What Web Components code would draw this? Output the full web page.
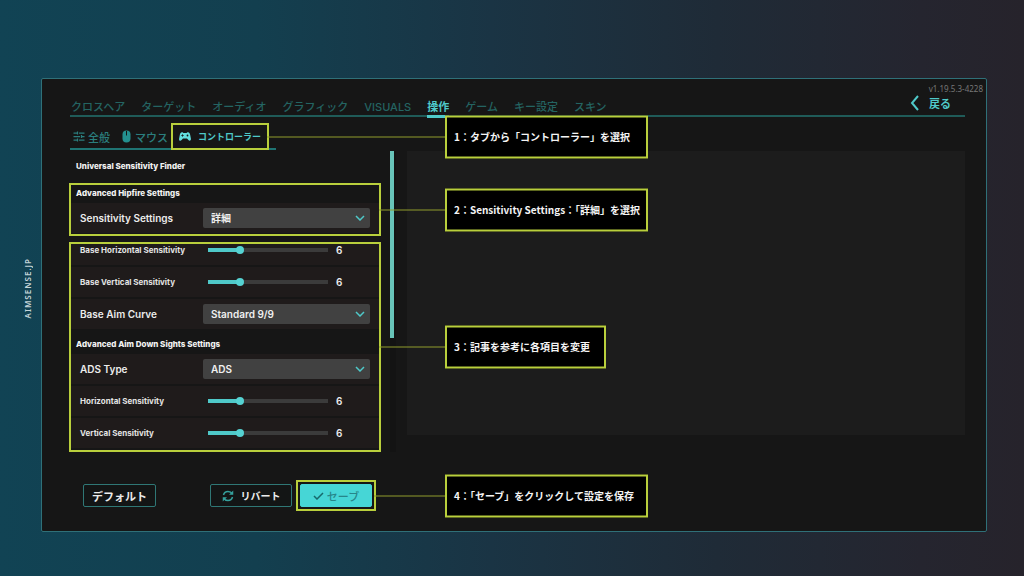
<!DOCTYPE html>
<html lang="ja">
<head>
<meta charset="utf-8">
<meta name="viewport" content="width=device-width, initial-scale=1">
<title>コントローラー設定</title>
<style>
  body {
    margin: 0;
    --teal: #4fc9c9;
    --teal-dim: #246462;
    --mark: #b9cf3c;
    --jp: "Noto Sans CJK JP", sans-serif;
    --ui: Inter, "Noto Sans CJK JP", sans-serif;
    font-family: var(--jp);
    color: #e8e8e8;
    background: linear-gradient(90deg, #114354 0%, #133f4f 25%, #1a3444 48%, #1f2b37 70%, #25252f 90%, #26232b 100%);
    min-height: 100vh;
  }
</style>
</head>
<body>
<guide-page>
  <span slot="brand">AIMSENSE.JP</span>
  <settings-panel></settings-panel>
</guide-page>

<script>
const define = (name, markup, setup) => {
  const template = document.createElement('template');
  template.innerHTML = markup;
  customElements.define(name, class extends HTMLElement {
    constructor() {
      super();
      this.attachShadow({ mode: 'open' }).append(template.content.cloneNode(true));
    }
    connectedCallback() {
      if (setup) setup(this, this.shadowRoot);
    }
  });
};

define('guide-page', `
  <style>
    :host { display: grid; grid-template-columns: 41px minmax(0, 1fr) 37px; min-height: 100vh; }
    aside { display: flex; align-items: center; justify-content: flex-end; padding-right: 8px; }
    .brand { writing-mode: vertical-rl; transform: rotate(180deg); font: 600 8px/10px "Noto Sans", sans-serif; letter-spacing: 1px; color: #c3d3d8; }
    main { padding: 78px 0 44px; }
  </style>
  <aside><div class="brand"><slot name="brand"></slot></div></aside>
  <main><slot></slot></main>
`);

define('ui-icon', `
  <style>
    :host { display: inline-flex; flex: none; }
    svg { display: block; fill: none; stroke: currentColor; stroke-width: 2; }
  </style>
`, (host, root) => {
  const icons = {
    sliders: [12, 11, '0 0 24 22', '<path d="M1 4h7M12 4h11M1 11h13M18 11h5M1 18h7M12 18h11M9 1v6M17 8v6M9 15v6" stroke-width="2.5"/>'],
    mouse: [9, 13, '0 0 18 26', '<rect x="1" y="1" width="16" height="24" rx="8" fill="currentColor" stroke="none"/><path d="M9 2v9" stroke="#161616"/>'],
    pad: [12, 9, '0 0 24 18', '<path d="M6 0.500c2 0 2.500 1.500 4 1.500h4c1.500 0 2-1.500 4-1.500 2.500 0 3.500 2 4.300 5l1.500 8c0.500 4-3 5-5 2.500L16 13H8l-2.800 3C3 18.500-0.300 17.500 0.200 13.500l1.500-8c0.800-3 1.800-5 4.300-5z" fill="currentColor" stroke="none"/><path d="M7 4.500v5M4.500 7h5" stroke="#161616" stroke-width="1.500"/><circle cx="17" cy="7" r="1.800" fill="#161616" stroke="none"/>'],
    back: [10, 16, '0 0 10 16', '<path d="M8 1L2 8l6 7"/>'],
    down: [10, 6, '0 0 10 6', '<path d="M1 1l4 4 4-4" stroke-width="1.500"/>'],
    check: [11, 8, '0 0 11 8', '<path d="M1 4l3 3 6-6" stroke-width="1.500"/>'],
    refresh: [12, 12, '0 0 24 24', '<path d="M3 10C4 6 7 3 12 3c4 0 7 2 9 5M21 14c-1 4-4 7-9 7-4 0-7-2-9-5" stroke-width="3"/><path d="M22.500 1v8.500H14zM1.500 23v-8.500H10z" fill="currentColor" stroke="none"/>']
  };
  const [w, h, box, shape] = icons[host.getAttribute('name')];
  root.querySelector('svg')?.remove();
  root.innerHTML += `<svg width="${w}" height="${h}" viewBox="${box}" aria-hidden="true">${shape}</svg>`;
});

define('guide-mark', `
  <style>
    :host { display: block; position: relative; box-sizing: border-box; border: 2px solid var(--mark); z-index: 2; }
    .note { position: absolute; left: 100%; top: 50%; transform: translateY(-50%); display: flex; align-items: center; pointer-events: none; }
    .line { width: var(--reach, 66px); height: 1px; background: #8f9c2c; }
    p { box-sizing: border-box; width: var(--note-width, 203px); margin: 0; padding: 12px 7px 13px; border: 2px solid var(--mark); background: #000; color: #f4f4f4; font: 700 10px/14px var(--jp); white-space: nowrap; }
  </style>
  <slot></slot>
  <div class="note" role="note"><span class="line"></span><p><slot name="note"></slot></p></div>
`);

define('main-tabs', `
  <style>
    :host { display: flex; align-items: flex-end; justify-content: space-between; height: 21px; border-bottom: 2px solid #1f5b58; margin-left: 1px; }
    nav { display: flex; gap: 16px; padding-left: 1px; }
    a { display: block; height: 17px; font: 500 11px/18px var(--ui); color: var(--teal-dim); text-decoration: none; white-space: nowrap; }
    a[aria-current] { color: var(--teal); font-weight: 700; border-bottom: 3px solid var(--teal); margin-bottom: -3px; }
    button { align-self: flex-start; display: flex; align-items: center; gap: 9px; padding: 0; margin-right: 14px; border: 0; background: none; color: var(--teal); font: 700 11px/18px var(--jp); }
  </style>
  <nav>
    <a href="#crosshair">クロスヘア</a><a href="#target">ターゲット</a><a href="#audio">オーディオ</a><a href="#graphic">グラフィック</a><a href="#visuals">VISUALS</a><a href="#control" aria-current="page">操作</a><a href="#game">ゲーム</a><a href="#keys">キー設定</a><a href="#skin">スキン</a>
  </nav>
  <button type="button"><ui-icon name="back"></ui-icon>戻る</button>
`);

define('sub-tabs', `
  <style>
    :host { display: flex; margin: 6px 0 0 1px; }
    nav { display: flex; align-items: stretch; box-sizing: border-box; height: 27px; padding: 0 7px 0 3px; background: linear-gradient(#1f7473, #1f7473) bottom / 100% 2px no-repeat; }
    a { display: flex; align-items: center; gap: 3px; color: #2b7e7e; font: 500 11px/16px var(--jp); text-decoration: none; white-space: nowrap; }
    .mouse { margin: 0 3px 0 12px; gap: 4px; }
    .mouse ui-icon { color: #23908f; }
    guide-mark { --reach: 178px; }
    .pad { height: 23px; padding: 0 6px; gap: 7px; color: var(--teal); font-size: 9px; font-weight: 700; }
    .pad ui-icon { color: #62dede; }
  </style>
  <nav>
    <a href="#general"><ui-icon name="sliders"></ui-icon>全般</a>
    <a class="mouse" href="#mouse"><ui-icon name="mouse"></ui-icon>マウス</a>
    <guide-mark>
      <a class="pad" href="#controller" aria-current="page"><ui-icon name="pad"></ui-icon>コントローラー</a>
      <span slot="note">1：タブから「コントローラー」を選択</span>
    </guide-mark>
  </nav>
`);

define('setting-heading', `
  <style>
    :host { display: block; }
    h2 { margin: 0; padding: var(--lead, 0) 0 0 5px; font: 800 8px/var(--line, 16px) var(--ui); color: #f2f2f2; }
  </style>
  <h2><slot></slot></h2>
`);

define('setting-select', `
  <style>
    :host { display: grid; grid-template-columns: 123px minmax(0, 1fr); align-items: center; height: 30px; padding: 0 9px; background: #1f1b1b; }
    label { font: 600 10px/16px var(--ui); color: #ececec; }
    .box { position: relative; }
    select { display: block; appearance: none; width: 100%; height: 20px; padding: 0 8px; border: 0; border-radius: 2px; background: #414141; color: #f0f0f0; font: 600 10px/20px var(--ui); }
    ui-icon { position: absolute; right: 5px; top: 7px; color: var(--teal); pointer-events: none; }
  </style>
  <label for="field"></label>
  <div class="box"><select id="field"><option></option></select><ui-icon name="down"></ui-icon></div>
`, (host, root) => {
  root.querySelector('label').textContent = host.getAttribute('label');
  root.querySelector('option').textContent = host.getAttribute('value');
});

define('setting-slider', `
  <style>
    :host { display: grid; grid-template-columns: 128px minmax(0, 1fr) 34px; align-items: center; height: 30px; padding: 0 9px; background: #1f1b1b; }
    label { font: 700 8px/12px var(--ui); color: #e4e4e4; white-space: nowrap; }
    input { appearance: none; width: 100%; height: 8px; margin: 0; background: linear-gradient(90deg, var(--teal) 26%, #3b3b3b 26%) center / 100% 4px no-repeat; }
    input::-webkit-slider-thumb { appearance: none; width: 8px; height: 8px; border-radius: 50%; background: #55d2d2; }
    .track { padding-right: 8px; display: flex; }
    output { font: 600 10px/14px var(--ui); color: #ececec; }
  </style>
  <label for="field"></label>
  <div class="track"><input id="field" type="range" min="0" max="24" value="6"></div>
  <output for="field">6</output>
`, (host, root) => {
  root.querySelector('label').textContent = host.getAttribute('label');
  const input = root.querySelector('input');
  input.addEventListener('input', () => { root.querySelector('output').textContent = input.value; });
});

define('action-button', `
  <style>
    :host { display: block; }
    button { display: flex; align-items: center; justify-content: center; gap: 7px; box-sizing: border-box; width: 100%; height: 23px; padding: 0; border: 1px solid #2f7775; border-radius: 2px; background: #131515; color: #ececec; font: 700 11px/16px var(--jp); white-space: nowrap; }
    ui-icon { color: #35a09c; }
    :host([icon]) button { font-size: 10px; }
    :host([primary]) button { gap: 3px; background: #46d6d6; border-color: #46d6d6; color: #27868a; font-weight: 500; font-size: 11px; }
    :host([primary]) ui-icon { color: #17696c; }
  </style>
  <button type="button"><slot></slot></button>
`, (host, root) => {
  const name = host.getAttribute('icon');
  if (name && !root.querySelector('ui-icon')) {
    const icon = document.createElement('ui-icon');
    icon.setAttribute('name', name);
    root.querySelector('button').prepend(icon);
  }
});

define('settings-panel', `
  <style>
    :host { display: block; box-sizing: border-box; border: 1px solid #2f7078; border-radius: 2px; background: #161616; padding: 4px 21px 20px 27px; }
    .version { margin: 0 -18px 0 0; text-align: right; font: 400 8px/11px "Noto Sans", sans-serif; color: #777; }
    .content { display: grid; grid-template-columns: 312px 6px minmax(0, 1fr); margin-top: 1px; }
    .general { --line: 30px; padding: 0 2px 2px; }
    .hipfire { padding-bottom: 1px; }
    .hipfire setting-heading { padding-bottom: 2px; }
    .values { margin-top: 6px; }
    .list { display: grid; gap: 2px; overflow: hidden; padding-bottom: 2px; }
    .list > :first-child { margin-top: -9px; }
    .list setting-heading { --line: 20px; --lead: 5px; margin: -2px 0; }
    .scroll { margin-left: 9px; width: 6px; background: #131313; }
    .scroll div { width: 4px; height: 62%; background: #68c4b9; }
    .preview { margin: 0 0 17px 20px; background: #1c1c1c; }
    footer { display: flex; align-items: center; margin-top: 28px; padding-left: 14px; }
    .default { width: 73px; margin-right: 54px; }
    .revert { width: 82px; margin-right: 4px; }
    .save { width: 80px; padding: 2px; --reach: 71px; }
  </style>
  <div class="version">v1.19.5.3-4228</div>
  <main-tabs></main-tabs>
  <sub-tabs></sub-tabs>
  <div class="content">
    <section>
      <setting-heading class="general">Universal Sensitivity Finder</setting-heading>
      <guide-mark class="hipfire">
        <setting-heading>Advanced Hipfire Settings</setting-heading>
        <setting-select label="Sensitivity Settings" value="詳細"></setting-select>
        <span slot="note">2：Sensitivity Settings：「詳細」を選択</span>
      </guide-mark>
      <guide-mark class="values" style="--note-width: 161px">
        <div class="list">
          <setting-slider label="Base Horizontal Sensitivity"></setting-slider>
          <setting-slider label="Base Vertical Sensitivity"></setting-slider>
          <setting-select label="Base Aim Curve" value="Standard 9/9"></setting-select>
          <setting-heading>Advanced Aim Down Sights Settings</setting-heading>
          <setting-select label="ADS Type" value="ADS"></setting-select>
          <setting-slider label="Horizontal Sensitivity"></setting-slider>
          <setting-slider label="Vertical Sensitivity"></setting-slider>
        </div>
        <span slot="note">3：記事を参考に各項目を変更</span>
      </guide-mark>
    </section>
    <div class="scroll"><div></div></div>
    <div class="preview"></div>
  </div>
  <footer>
    <action-button class="default">デフォルト</action-button>
    <action-button class="revert" icon="refresh">リバート</action-button>
    <guide-mark class="save">
      <action-button primary icon="check">セーブ</action-button>
      <span slot="note">4：「セーブ」をクリックして設定を保存</span>
    </guide-mark>
  </footer>
`);
</script>
</body>
</html>
